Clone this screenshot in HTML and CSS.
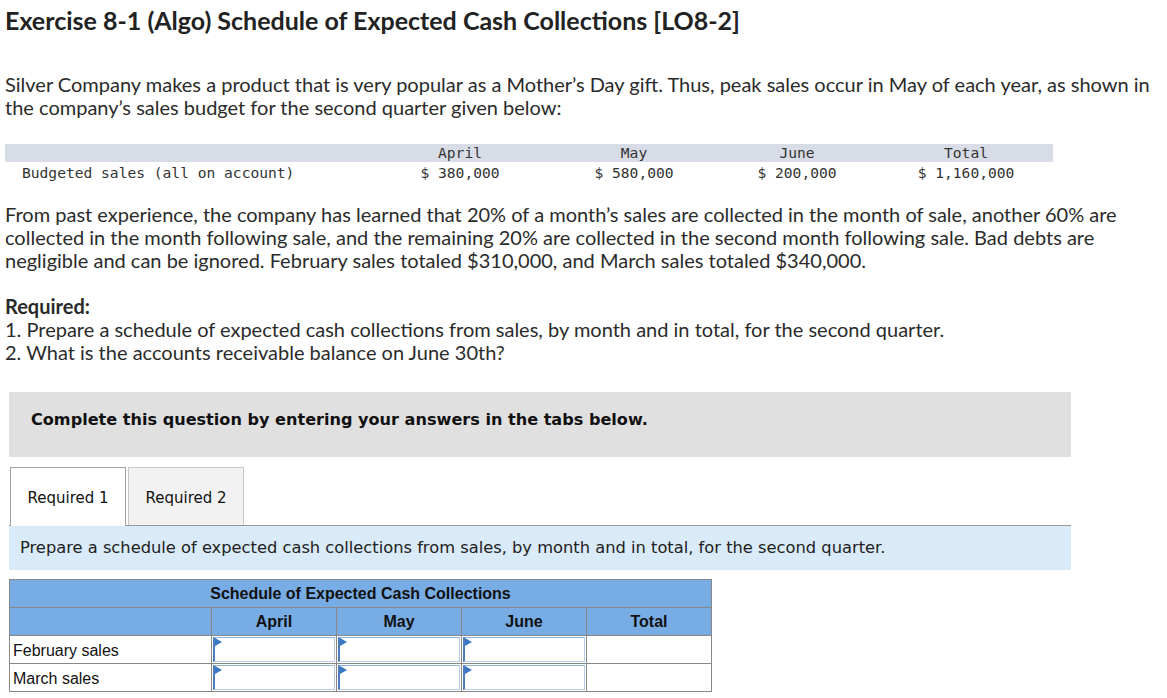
FILE: index.html
```html
<!DOCTYPE html>
<html>
<head>
<meta charset="utf-8">
<link rel="stylesheet" href="styles.css">
</head>
<body>
<div class="page">
  <h1 class="title">Exercise 8-1 (Algo) Schedule of Expected Cash Collections [LO8-2]</h1>
  <p class="para p1">Silver Company makes a product that is very popular as a Mother’s Day gift. Thus, peak sales occur in May of each year, as shown in<br>the company’s sales budget for the second quarter given below:</p>

  <div class="budget">
    <div class="brow bhead">
      <span class="blabel"></span>
      <span class="bcol">April</span>
      <span class="bcol">May</span>
      <span class="bcol june">June</span>
      <span class="bcol">Total</span>
    </div>
    <div class="brow bvals">
      <span class="blabel">Budgeted sales (all on account)</span>
      <span class="bcol">$ 380,000</span>
      <span class="bcol">$ 580,000</span>
      <span class="bcol june">$ 200,000</span>
      <span class="bcol">$ 1,160,000</span>
    </div>
  </div>

  <p class="para p2">From past experience, the company has learned that 20% of a month’s sales are collected in the month of sale, another 60% are<br>collected in the month following sale, and the remaining 20% are collected in the second month following sale. Bad debts are<br>negligible and can be ignored. February sales totaled $310,000, and March sales totaled $340,000.</p>

  <div class="para req">
    <div class="req-title">Required:</div>
    <div>1. Prepare a schedule of expected cash collections from sales, by month and in total, for the second quarter.</div>
    <div>2. What is the accounts receivable balance on June 30th?</div>
  </div>

  <div class="notice">Complete this question by entering your answers in the tabs below.</div>

  <div class="tabs">
    <div class="tab active">Required 1</div>
    <div class="tab">Required 2</div>
  </div>
  <div class="instr">Prepare a schedule of expected cash collections from sales, by month and in total, for the second quarter.</div>

  <table class="sched">
    <colgroup>
      <col class="c-lbl"><col class="c-val"><col class="c-val"><col class="c-val"><col class="c-val">
    </colgroup>
    <thead>
      <tr><th colspan="5" class="caption">Schedule of Expected Cash Collections</th></tr>
      <tr><th></th><th>April</th><th>May</th><th>June</th><th>Total</th></tr>
    </thead>
    <tbody>
      <tr>
        <td class="lbl">February sales</td>
        <td class="in"><div class="box"></div></td>
        <td class="in"><div class="box"></div></td>
        <td class="in"><div class="box"></div></td>
        <td></td>
      </tr>
      <tr>
        <td class="lbl">March sales</td>
        <td class="in"><div class="box"></div></td>
        <td class="in"><div class="box"></div></td>
        <td class="in"><div class="box"></div></td>
        <td></td>
      </tr>
    </tbody>
  </table>
</div>
</body>
</html>
```

FILE: styles.css
```css
html, body {
  margin: 0;
  padding: 0;
  background: #fff;
}
.page {
  padding: 0 0 0 5px;
  font-family: "Lato", "Liberation Sans", sans-serif;
  color: #2b2b2b;
}
.title {
  margin: 0;
  padding-top: 5px;
  font-size: 25px;
  line-height: 30px;
  font-weight: 700;
  color: #222;
}
.para {
  margin: 0;
  font-size: 20px;
  line-height: 23px;
}
.p1 {
  margin-top: 38px;
}
.budget {
  margin-top: 25px;
  width: 1048px;
  font-family: "DejaVu Sans Mono", "Liberation Mono", monospace;
  font-size: 14.6px;
  color: #333;
}
.brow {
  display: grid;
  grid-template-columns: 370px 170px 178px 156px 174px;
  height: 18px;
  line-height: 18px;
}
.bhead {
  background: #d8dce6;
}
.bvals {
  height: 20px;
  line-height: 22px;
}
.blabel {
  padding-left: 17px;
}
.bcol {
  text-align: center;
}
.june {
  padding-right: 8px;
}
.p2 {
  margin-top: 21px;
}
.req {
  margin-top: 23px;
}
.req-title {
  font-weight: 700;
}
.notice {
  margin: 28px 0 0 4px;
  width: 1062px;
  height: 65px;
  box-sizing: border-box;
  padding: 18px 0 0 22px;
  background: #e0e0e0;
  font-family: "DejaVu Sans", Verdana, sans-serif;
  font-weight: 700;
  font-size: 16.1px;
  color: #111;
}
.tabs {
  display: flex;
  gap: 2px;
  margin: 10px 0 0 4px;
  width: 1062px;
  border-bottom: 1px solid #999;
  font-family: "DejaVu Sans", Tahoma, sans-serif;
  font-size: 15px;
  color: #111;
}
.tab {
  width: 116px;
  height: 58px;
  box-sizing: border-box;
  border: 1px solid #c8c8c8;
  border-bottom: none;
  background: #f2f2f2;
  display: flex;
  align-items: center;
  justify-content: center;
  padding-top: 2px;
  margin-bottom: -1px;
}
.tab:first-child {
  margin-left: 1px;
}
.tab.active {
  background: #fff;
  border-color: #a0a0a0;
  height: 59px;
  position: relative;
}
.instr {
  margin-left: 4px;
  width: 1062px;
  height: 44px;
  box-sizing: border-box;
  padding: 12px 0 0 11px;
  background: #d9eaf8;
  font-family: "DejaVu Sans", Tahoma, sans-serif;
  font-size: 16.3px;
  color: #222;
}
.sched {
  margin: 9px 0 0 4px;
  border-collapse: collapse;
  font-family: "Liberation Sans", Arial, sans-serif;
  font-size: 16px;
  color: #111;
  table-layout: fixed;
  width: 703px;
}
.c-lbl {
  width: 202px;
}
.c-val {
  width: 125px;
}
.sched tr {
  height: 28px;
}
.sched th, .sched td {
  border: 1px solid #888;
  padding: 0;
}
.sched th {
  background: #78ace4;
  font-weight: 700;
  text-align: center;
}
.sched td.lbl {
  padding-left: 3px;
  vertical-align: middle;
  padding-top: 2px;
}
.sched td.in {
  padding: 1px;
}
.box {
  position: relative;
  height: 25px;
  box-sizing: border-box;
  border: 1px solid #b7cde9;
  border-left: 2px solid #4d7dbd;
  border-top-color: #8fb2dd;
  background: #fff;
}
.box::before {
  content: "";
  position: absolute;
  left: 0;
  top: 0;
  border-left: 7px solid #3a77c4;
  border-top: 4px solid transparent;
  border-bottom: 4px solid transparent;
}
```
